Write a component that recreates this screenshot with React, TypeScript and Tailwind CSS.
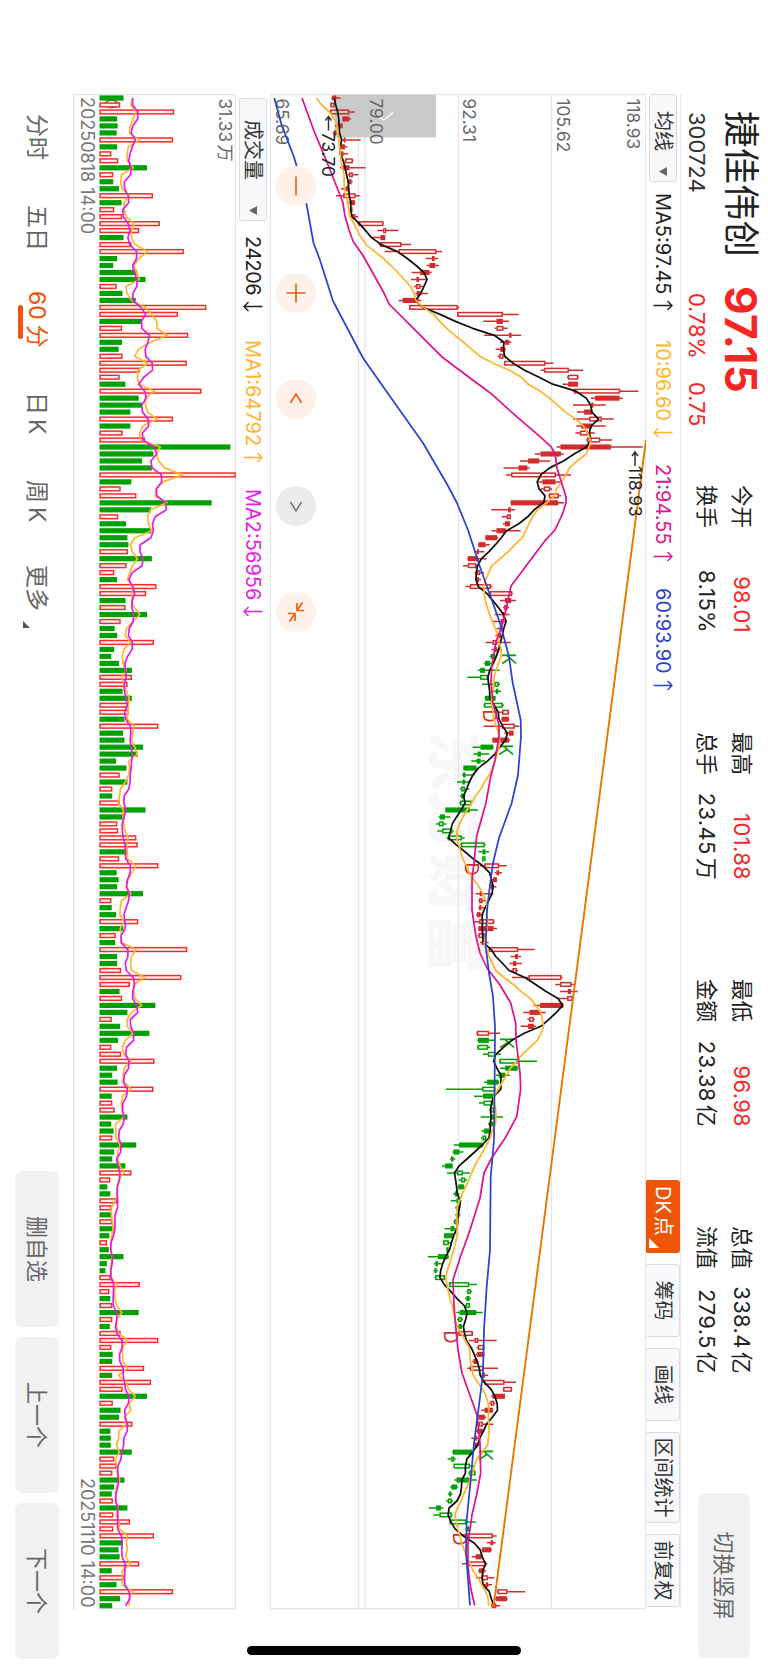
import { Fragment } from 'react'

type Candle = [number, number, number, number]
type Point = [number, number]

const STEP = 6.98
const FIRST = 4

// bar heights out of 278 (31.33万), negative = falling bar
const volumes = [
  -49, 42, 152, -36, -37, -35, 150, -36, 24, 38, -97, 28, -28, -40, 109, -45, 30, 46, 123, 81,
  -49, 65, 172, -36, -28, -77, -94, 35, -47, -74, 218, 160, -87, 46, 181, -46, -39, 47, 178, 82,
  41, -53, 208, -80, -87, -63, 150, -63, 47, 93, -267, -110, -87, -107, 278, -65, 43, 75, -229, -105,
  38, -54, -106, -57, -59, 58, -107, 55, 30, -36, 116, 95, -53, 53, -97, 43, -31, -36, 111, -30,
  -24, -40, -66, 66, 57, -47, -66, 59, 59, -51, 120, -48, -51, -89, -78, -34, -55, 41, -57, 26,
  -26, 41, -94, -51, 36, 38, 75, 78, -57, 40, 120, -35, -39, -36, -89, 24, -25, -34, 79, -49,
  33, -32, 179, -36, -36, 44, 167, 62, -41, 46, -114, -57, 25, -42, -102, -38, 24, 44, 112, -36,
  -26, -37, 110, -25, 26, 31, -57, -24, -29, 26, -75, -30, -26, -53, 65, 22, -16, -22, 36, 24,
  -24, 26, -29, -20, 15, -19, -49, -15, -12, 23, 82, 20, -22, 26, -80, 26, -21, 43, 120, 24,
  -27, -26, 91, -26, 105, 47, -97, 27, -43, -40, 67, -22, -23, -23, -66, 30, 35, 26, -51, -30,
  -25, 27, -57, 28, 62, 28, 111, -46, -39, -41, 81, -25, 49, -35, 150, -42, -26,
]

// [low, body low, body high, high], three units to a pixel
const opening: Candle[] = [
  [33, 37, 48, 62], [30, 32, 43, 46], [30, 31, 87, 104], [66, 68, 87, 93], [45, 52, 67, 69],
  [38, 42, 48, 50], [66, 72, 76, 122], [56, 63, 74, 82], [58, 62, 70, 84], [74, 76, 98, 100],
  [60, 70, 88, 137], [84, 88, 98, 115], [82, 87, 94, 98], [63, 78, 86, 90], [48, 70, 106, 119],
  [80, 93, 104, 106], [92, 94, 97, 98], [94, 97, 106, 114], [112, 116, 190, 192], [172, 190, 198, 235],
  [155, 182, 195, 196], [176, 180, 244, 273], [194, 236, 349, 366], [317, 337, 343, 354], [320, 329, 345, 357],
  [275, 301, 328, 335], [273, 290, 296, 322], [281, 289, 301, 310], [286, 291, 300, 324], [236, 249, 295, 304],
  [267, 268, 413, 418], [411, 412, 548, 596], [490, 530, 548, 567], [524, 530, 550, 563], [492, 568, 574, 603],
  [540, 556, 567, 574], [527, 541, 555, 558], [533, 538, 550, 554], [551, 553, 676, 700], [662, 673, 746, 789],
  [741, 744, 774, 776], [728, 745, 773, 774], [758, 762, 900, 955], [813, 826, 898, 908], [759, 815, 820, 857],
  [771, 793, 816, 817], [759, 808, 845, 881], [769, 784, 816, 857], [766, 780, 803, 825], [798, 802, 840, 876],
  [710, 722, 872, 968], [645, 662, 722, 731], [600, 625, 657, 691], [551, 596, 621, 629], [558, 574, 707, 753],
]

const later: Candle[] = [
  [415, 428, 466, 480], [422, 432, 450, 456], [445, 447, 476, 484], [332, 333, 474, 492], [274, 325, 332, 345],
  [305, 321, 332, 333], [309, 316, 329, 331], [275, 290, 317, 362], [255, 257, 291, 295], [234, 236, 256, 269],
  [224, 231, 236, 253], [202, 204, 234, 260], [189, 204, 228, 240], [224, 230, 240, 252], [225, 230, 236, 243],
  [197, 210, 272, 277], [268, 270, 336, 338], [300, 316, 333, 348], [309, 313, 322, 327], [284, 308, 314, 329],
  [277, 303, 309, 316], [290, 300, 306, 312], [286, 296, 302, 307], [257, 278, 291, 333], [275, 284, 290, 300],
  [269, 273, 285, 287], [252, 256, 270, 274], [234, 241, 254, 299], [202, 241, 264, 266], [246, 284, 296, 300],
  [280, 288, 294, 303], [254, 256, 286, 287], [250, 253, 308, 312], [298, 307, 326, 328], [304, 306, 326, 328],
  [251, 305, 344, 358], [313, 327, 340, 342], [276, 278, 326, 330], [218, 242, 279, 281], [220, 233, 242, 268],
  [214, 231, 241, 255], [189, 191, 229, 230], [186, 190, 196, 223], [171, 188, 194, 211], [180, 184, 194, 208],
  [180, 184, 194, 196], [177, 181, 214, 216], [135, 137, 209, 234], [116, 120, 134, 151], [108, 117, 130, 139],
  [112, 127, 157, 161], [140, 144, 185, 194], [182, 183, 254, 257], [235, 248, 256, 268], [245, 247, 256, 257],
  [240, 254, 297, 320], [284, 290, 297, 306], [275, 280, 290, 292], [267, 273, 281, 289], [227, 240, 246, 280],
  [235, 238, 247, 257], [235, 238, 244, 256], [228, 232, 241, 251], [220, 238, 281, 284], [234, 236, 280, 291],
  [233, 236, 254, 256], [240, 246, 252, 266], [265, 267, 354, 404], [332, 346, 353, 363], [328, 340, 348, 366],
  [334, 338, 350, 354], [336, 386, 484, 488], [466, 481, 514, 524], [480, 504, 512, 533], [474, 502, 518, 519],
  [401, 421, 489, 490], [370, 389, 421, 437], [382, 388, 401, 404], [362, 385, 401, 408], [229, 231, 267, 300],
  [231, 235, 266, 285], [231, 233, 264, 270], [249, 264, 286, 303], [297, 299, 352, 411], [300, 316, 352, 355],
  [288, 297, 315, 329], [252, 262, 295, 299], [137, 247, 285, 287], [222, 250, 284, 286], [237, 251, 278, 282],
  [268, 272, 282, 286], [242, 271, 281, 309], [264, 270, 279, 288], [244, 253, 267, 272], [242, 248, 258, 260],
  [161, 178, 248, 252], [157, 161, 178, 190], [150, 154, 160, 166], [126, 136, 157, 159], [141, 172, 188, 210],
  [176, 184, 195, 201], [168, 176, 191, 194], [160, 165, 173, 178], [152, 170, 180, 184], [165, 170, 178, 180],
  [166, 170, 178, 182], [160, 163, 172, 174], [134, 152, 163, 172], [131, 133, 161, 162], [128, 130, 146, 154],
  [138, 140, 145, 148], [84, 114, 145, 148], [102, 107, 113, 126], [100, 104, 109, 114], [103, 106, 134, 137],
  [146, 148, 207, 231], [200, 202, 212, 216], [195, 200, 208, 213], [195, 198, 209, 211], [169, 180, 228, 248],
  [171, 175, 185, 189], [173, 177, 185, 188], [174, 176, 218, 220], [206, 224, 234, 290], [230, 234, 252, 254],
  [227, 232, 252, 254], [217, 221, 232, 236], [202, 210, 250, 294], [244, 248, 254, 264], [250, 253, 313, 348],
  [308, 310, 335, 337], [273, 278, 314, 315], [268, 272, 282, 286], [243, 254, 278, 280], [232, 236, 254, 258],
  [230, 236, 248, 280], [228, 232, 248, 250], [214, 226, 231, 240], [220, 224, 232, 238], [157, 159, 215, 217],
  [143, 154, 163, 167], [160, 161, 209, 223], [205, 208, 226, 228], [163, 170, 210, 231], [150, 155, 170, 174],
  [144, 148, 153, 157], [138, 144, 155, 159], [86, 109, 122, 130], [101, 119, 155, 158], [148, 149, 198, 227],
  [196, 201, 208, 212], [196, 200, 278, 290], [261, 272, 279, 287], [245, 247, 273, 275], [216, 228, 244, 248],
  [186, 202, 258, 262], [234, 238, 252, 258], [228, 244, 263, 283], [252, 258, 264, 276], [290, 293, 322, 375],
  [281, 289, 320, 323], [274, 276, 288, 300],
]

const candles: Candle[] = [
  ...opening.map((c) => c.map((v) => v - 240) as Candle),
  ...later,
]

const ma21: Point[] = [
  [98, 302], [131, 314], [159, 325.7], [196, 340.4], [202, 342.7], [216, 345], [230, 349], [241.7, 353.3],
  [255, 362.7], [291.7, 383.3], [304, 389], [331.7, 416.7], [356.7, 441.7], [378, 470], [392.7, 490],
  [416.7, 516.7], [436.7, 540], [446.7, 551], [453.7, 555], [467.7, 557], [481, 561], [496.7, 566],
  [503, 566], [514, 562.5], [530, 555], [540.7, 545], [586, 511], [606.7, 506.7], [626.7, 501.7], [641.7, 496],
  [666.7, 491.7], [683, 491], [703, 493], [725, 499], [736.7, 499], [760, 495], [776.7, 490.7],
  [802.7, 486], [836, 476.7], [863, 474], [880, 472], [910, 472], [936.7, 476], [953, 480], [968, 487],
  [985, 500], [1003, 510.7], [1023, 515.7], [1040, 516], [1073, 520], [1089, 520.7], [1116.7, 516.7],
  [1136.7, 506], [1158, 491.7], [1173, 484], [1198, 480], [1230, 470], [1258, 460], [1280, 453],
  [1305, 454], [1330, 456], [1350, 458], [1373, 462], [1415, 477], [1443, 480], [1473, 480.7], [1493, 477],
  [1515, 472], [1543, 468], [1567, 468], [1588, 470.7], [1605.5, 474.7],
]

const ma60: Point[] = [
  [98, 274.3], [125, 281.6], [156.7, 293.9], [190, 303.7], [210, 307.6], [243, 313.5], [260, 320],
  [278, 325.7], [301, 333], [358, 363], [391.7, 386.7], [443, 423], [485, 447.5], [503, 457], [530, 468],
  [567, 480], [595, 490], [623, 500], [656.7, 509], [683, 512.7], [705, 517.5], [720, 520.7], [736.7, 521],
  [775, 518], [803, 511.7], [838, 499], [863, 493], [885, 490], [910, 487], [946.7, 485.7], [973, 489],
  [996.7, 493], [1026.7, 495], [1073, 494.7], [1140, 494], [1176.7, 490.7], [1250, 490], [1286.7, 486.7],
  [1330, 484], [1373, 483], [1413, 478], [1443, 474], [1480, 470.7], [1520, 466.7], [1553, 466], [1605.5, 470],
]

const marks = [
  { text: 'K', x: 565, y: 138 },
  { text: 'D', x: 622, y: 156.5 },
  { text: 'K', x: 656, y: 141 },
  { text: 'D', x: 775, y: 175 },
  { text: 'K', x: 949, y: 139.5 },
  { text: 'D', x: 1243, y: 196 },
  { text: 'K', x: 1361, y: 160.5 },
  { text: 'D', x: 1445, y: 187 },
]

const stats = [
  [
    { label: '今开', value: '98.01', up: true },
    { label: '换手', value: '8.15%' },
  ],
  [
    { label: '最高', value: '101.88', up: true },
    { label: '总手', value: '23.45', unit: '万' },
  ],
  [
    { label: '最低', value: '96.98', up: true },
    { label: '金额', value: '23.38', unit: '亿' },
  ],
  [
    { label: '总值', value: '338.4', unit: '亿' },
    { label: '流值', value: '279.5', unit: '亿' },
  ],
]

const barX = (i: number) => FIRST + i * STEP
const levelY = (v: number) => 246 - v / 3
const volumeY = (v: number) => 136.5 - (v / 278) * 136.2

const average = (values: number[], i: number, n: number) =>
  values.slice(i - n + 1, i + 1).reduce((a, b) => a + b, 0) / n

const toPath = (points: Point[]) =>
  points.map(([x, y], i) => `${i ? 'L' : 'M'}${x.toFixed(1)} ${y.toFixed(1)}`).join('')

// bar 134 opened on a gap down and closed above its open
const isHollow = (i: number) => volumes[i] > 0 || i === 134

const closes = candles.map((c, i) => (isHollow(i) ? c[2] : c[1]))
const priceAverage = (n: number, lead: number[]) =>
  toPath(
    closes.map((_, i) => [barX(i), levelY(i < lead.length ? lead[i] - 240 : average(closes, i, n))] as Point),
  )
const ma5Path = priceAverage(5, [43, 47, 53, 56])
const ma10Path = priceAverage(10, [-11, 5, 28, 43, 52, 54, 56, 59, 61])

// volume history before the first visible bar
const earlier = [42, 42, 42, 137, 72, 62, 97, 71, 61]
const allVolumes = [...earlier, ...volumes.map(Math.abs)]
const volumeAverage = (n: number) =>
  toPath(volumes.map((_, i) => [barX(i), volumeY(average(allVolumes, i + earlier.length, n))] as Point))

const levels = (points: Point[]) => toPath(points.map(([x, l]) => [x - 94, 646 - l] as Point))

const isGreen = (i: number) =>
  (i >= 80 && i <= 87) || (i >= 93 && i <= 109) || (i >= 135 && i <= 176) || (i >= 194 && i <= 205)

function Arrow({ down }: { down?: boolean }) {
  return (
    <svg width="11" height="20" viewBox="0 0 11 20" fill="none" stroke="currentColor" strokeWidth="1.4">
      <path d={down ? 'M5.5 0.5V19M1 14.5L5.5 19L10 14.5' : 'M5.5 19.5V1M1 5.5L5.5 1L10 5.5'} />
    </svg>
  )
}

function Legend({ text, down, className }: { text: string; down?: boolean; className: string }) {
  return (
    <div className={`flex shrink-0 items-center gap-[6px] text-[20px] whitespace-nowrap ${className}`}>
      <span>{text}</span>
      <Arrow down={down} />
    </div>
  )
}

function Picker({ label, className }: { label: string; className: string }) {
  return (
    <div
      className={`flex h-[28px] shrink-0 items-center justify-between rounded-[3px] border border-[#d8dbe2] bg-[#f7f8fa] pr-[5px] text-[20px] text-[#333] ${className}`}
    >
      <span>{label}</span>
      <svg width="9" height="8" viewBox="0 0 9 8">
        <path d="M0 0H9L4.5 8Z" fill="#666" />
      </svg>
    </div>
  )
}

function ToolButton({ label, className }: { label: string; className: string }) {
  return (
    <div
      className={`flex h-[35px] items-center justify-center rounded-[3px] border border-[#d8dbe2] bg-[#f7f8fa] text-[20px] whitespace-nowrap text-[#333] ${className}`}
    >
      {label}
    </div>
  )
}

function RoundButton({ path, gray }: { path: string; gray?: boolean }) {
  return (
    <div className={`flex size-10 items-center justify-center rounded-full ${gray ? 'bg-[#ececec]' : 'bg-[#fef1ea]'}`}>
      <svg
        width="20"
        height="20"
        viewBox="0 0 20 20"
        fill="none"
        stroke={gray ? '#777' : '#f05a0a'}
        strokeWidth="1.6"
      >
        <path d={path} />
      </svg>
    </div>
  )
}

function PriceChart() {
  return (
    <svg className="block" width="1516" height="376" viewBox="0 0 1516 376" fontFamily="Inter, sans-serif">
      <text
        x="637"
        y="212"
        fontSize="60"
        letterSpacing="0.8"
        fontWeight="900"
        fill="#f7f7f7"
        fontFamily="'Noto Sans CJK SC', sans-serif"
      >
        东方财富
      </text>
      <g stroke="#e3e4ee" strokeWidth="1.2">
        <path d="M0 94.5H1515M0 187.5H1515M0 281H1515M0 287.5H1515" />
        <path d="M0 0.5H1515M0.6 0V376M1514.6 0V376M0 375.5H1515" stroke="#e6e6ea" />
      </g>
      <rect x="0.5" y="210" width="43" height="101.5" fill="#cacaca" />
      <path d="M23.5 266.5L26 262L18.5 253" fill="none" stroke="#fff" strokeWidth="1.4" />

      {/* Axis labels */}
      <g fontSize="17.3" fill="#666">
        <text x="4.5" y="19">118.93</text>
        <text x="4.5" y="89">105.62</text>
        <text x="4.5" y="183">92.31</text>
        <text x="4.5" y="276.5">79.00</text>
        <text x="4.5" y="370">65.69</text>
      </g>

      {/* Candles */}
      {candles.map(([low, from, to, high], i) => {
        const x = barX(i)
        const color = isGreen(i) ? '#00a000' : '#d12c2c'
        const top = levelY(to)
        const bottom = levelY(from)
        return (
          <g key={i} stroke={color} strokeWidth="1.5">
            <path d={`M${x} ${levelY(high)}V${top}M${x} ${bottom}V${levelY(low)}`} />
            <rect
              x={x - 1.8}
              y={top + 0.5}
              width="3.6"
              height={Math.max(bottom - top - 1, 0.4)}
              fill={isHollow(i) ? 'none' : color}
            />
          </g>
        )
      })}

      {marks.map((m) => (
        <text key={m.x} x={m.x} y={m.y + 6.3} fontSize="18" textAnchor="middle" fill={m.text === 'K' ? '#00a000' : '#d12c2c'}>
          {m.text}
        </text>
      ))}

      <g fill="none" strokeWidth="1.75" strokeLinejoin="round">
        <path d={ma5Path} stroke="#111" />
        <path d={ma10Path} stroke="#ffb52e" />
        <path d={levels(ma21)} stroke="#e0148c" />
        <path d={levels(ma60)} stroke="#2a44cc" />
        <path d="M346 0L1513 152.5" stroke="#e67800" strokeWidth="1.9" />
      </g>
      <rect x="1509.5" y="150.5" width="4" height="4" fill="#f05a0a" />

      {/* High and low notes */}
      <g fill="none" stroke="#333" strokeWidth="1.5">
        <path d="M36.5 317.5H22.5M26.5 314.5L22.5 317.5L26.5 320.5" />
        <path d="M372 11H358M362 8L358 11L362 14" />
      </g>
      <g fontSize="17.3" fill="#222">
        <text x="38" y="324">73.70</text>
        <text x="372" y="17">118.93</text>
      </g>
    </svg>
  )
}

function VolumeChart() {
  return (
    <svg className="block" width="1516" height="163" viewBox="0 0 1516 163" fontFamily="Inter, 'Noto Sans CJK SC', sans-serif">
      <path
        d="M0 0.5H1515M0.6 0V162.5M1514.6 0V137M0 162.3H1516"
        fill="none"
        stroke="#e3e3e8"
        strokeWidth="1.2"
      />
      <g fontSize="17.3" fill="#666">
        <text x="4.5" y="17.5">
          31.33<tspan dx="2.5">万</tspan>
        </text>
        <text x="4.5" y="131.5">0</text>
      </g>
      {volumes.map((v, i) => {
        const top = volumeY(Math.abs(v))
        return v > 0 ? (
          <rect
            key={i}
            x={barX(i) - 1.9}
            y={top + 0.6}
            width="3.8"
            height={136 - top - 0.7}
            fill="#fff0f0"
            stroke="#f52d2d"
            strokeWidth="1.5"
          />
        ) : (
          <rect key={i} x={barX(i) - 2.6} y={top} width="5.2" height={136.5 - top} fill="#00a000" />
        )
      })}
      <g fill="none" strokeWidth="1.7" strokeLinejoin="round">
        <path d={volumeAverage(5)} stroke="#ffb52e" />
        <path d={volumeAverage(10)} stroke="#e61ce6" />
      </g>
      <g fontSize="18" fill="#777">
        <text x="3" y="155.5">20250818 14:00</text>
        <text x="1513.5" y="155.5" textAnchor="end">
          20251110 14:00
        </text>
      </g>
    </svg>
  )
}

export default function App() {
  return (
    <div className="h-[1669px] w-[768px] overflow-hidden bg-white">
      <div className="relative h-[768px] w-[1669px] origin-top-left translate-x-[768px] rotate-90 bg-white font-['Inter','Noto_Sans_CJK_SC',sans-serif] text-[#222]">
        {/* Quote header */}
        <header className="flex h-[87px] pl-[111px]">
          <div className="w-[175px] shrink-0 pt-[7px]">
            <h1 className="text-[36.5px] leading-[40px] text-[#222]">捷佳伟创</h1>
            <div className="mt-[11px] pl-px text-[22px] leading-[26px] text-[#333]">300724</div>
          </div>
          <div className="w-[199px] shrink-0 pt-[7px] text-[#f82525]">
            <div className="text-[44px] leading-[40px] font-bold tracking-[0.3px]">97.15</div>
            <div className="mt-[11px] flex pl-[7px] text-[22px] leading-[26px] tracking-[-0.2px]">
              <span className="w-[89px]">0.78%</span>
              <span>0.75</span>
            </div>
          </div>
          <div className="flex shrink-0 gap-[99px]">
            {stats.map((rows) => (
              <div key={rows[0].label} className="grid w-[148px] grid-cols-[auto_auto] content-start justify-between pt-[9px] text-[21.5px] leading-[35px]">
                {rows.map((row) => (
                  <Fragment key={row.label}>
                    <span>{row.label}</span>
                    <span className={`text-right text-[22px] tracking-[0.3px] ${row.up ? 'text-[#f82525]' : ''}`}>
                      {row.value}
                      {row.unit && <span className="ml-[3px]">{row.unit}</span>}
                    </span>
                  </Fragment>
                ))}
              </div>
            ))}
          </div>
          <button className="mt-[18px] ml-[119px] h-[52px] w-[165px] shrink-0 rounded-[7px] bg-[#f1f1f3] text-[22px] text-[#666]">
            切换竖屏
          </button>
        </header>

        {/* Moving averages and tools */}
        <div className="mr-[60px] ml-[94px] flex h-[35px] items-center border-t border-[#e6e6ea]">
          <Picker label="均线" className="w-[88px] pl-[16px]" />
          <Legend text="MA5:97.45" className="ml-[11px] w-[147px]" />
          <Legend text="10:96.60" down className="w-[124px] text-[#ffb52e]" />
          <Legend text="21:94.55" className="w-[124px] text-[#e0148c]" />
          <Legend text="60:93.90" className="text-[#2a44cc]" />
          <div className="mr-[2px] ml-auto flex gap-[11px]">
            <div className="flex h-[35px] w-[73px] items-center gap-[2px] rounded-[3px] bg-[#ee5506] pl-[6px] text-[20px] whitespace-nowrap text-white">
              <span>
                DK<span className="ml-[2px]">点</span>
              </span>
              <svg className="mt-[18px]" width="10" height="10" viewBox="0 0 10 10">
                <path d="M10 0V10H0Z" fill="#fff" />
              </svg>
            </div>
            <ToolButton label="筹码" className="w-[73px]" />
            <ToolButton label="画线" className="w-[73px]" />
            <ToolButton label="区间统计" className="w-[91px]" />
            <ToolButton label="前复权" className="w-[73px]" />
          </div>
        </div>

        {/* Price panel */}
        <div className="relative ml-[94px] h-[376px]">
          <PriceChart />
          <div className="absolute top-[330px] left-[72px] flex gap-[66.5px]">
            <RoundButton path="M0.5 10H19.5" />
            <RoundButton path="M0.5 10H19.5M10 0.5V19.5" />
            <RoundButton path="M14 4.5L5 10L14 15.5" />
            <RoundButton path="M6 4.5L15 10L6 15.5" gray />
            <RoundButton path="M0.5 3.5L8.5 9M8.5 2V9H1M19.5 16.5L11.5 11M19 11H11.5V18" />
          </div>
        </div>

        {/* Volume legend */}
        <div className="ml-[98px] flex h-[34px] items-center">
          <Picker label="成交量" className="w-[123px] pl-[21px]" />
          <Legend text="24206" down className="ml-[15px] w-[104px] tracking-[-0.6px]" />
          <Legend text="MA1:64792" className="w-[149px] text-[#ffb52e]" />
          <Legend text="MA2:56956" down className="text-[#e61ce6]" />
        </div>

        <div className="ml-[94px] h-[163px]">
          <VolumeChart />
        </div>

        {/* Period tabs */}
        <nav className="flex h-[73px] pl-[114px] text-[23px] leading-[30px] text-[#666]">
          <div className="flex pt-[21px] whitespace-nowrap">
            <span className="w-[91px]">分时</span>
            <span className="w-[86px]">五日</span>
            <div className="w-[101px] text-[#ee5506]">
              60<span className="ml-[5px]">分</span>
              <div className="ml-[14px] -mt-px h-[5px] w-[34px] rounded-full bg-[#ee5506]" />
            </div>
            <span className="w-[88px]">
              日<span className="ml-[4px]">K</span>
            </span>
            <span className="w-[85px]">
              周<span className="ml-[4px]">K</span>
            </span>
            <span>更多</span>
            <svg className="mt-[22px] ml-[10px]" width="7" height="7" viewBox="0 0 7 7">
              <path d="M7 0V7H0Z" fill="#555" />
            </svg>
          </div>
          <div className="mt-[14px] mr-[10px] ml-auto flex gap-[10px] text-[22px]">
            <button className="h-[44px] w-[156px] rounded-[7px] bg-[#f1f1f3]">删自选</button>
            <button className="h-[44px] w-[156px] rounded-[7px] bg-[#f1f1f3]">上一个</button>
            <button className="h-[44px] w-[156px] rounded-[7px] bg-[#f1f1f3]">下一个</button>
          </div>
        </nav>

        {/* Home indicator */}
        <div className="absolute top-[247px] right-[14px] h-[274px] w-[9px] rounded-full bg-black" />
      </div>
    </div>
  )
}
